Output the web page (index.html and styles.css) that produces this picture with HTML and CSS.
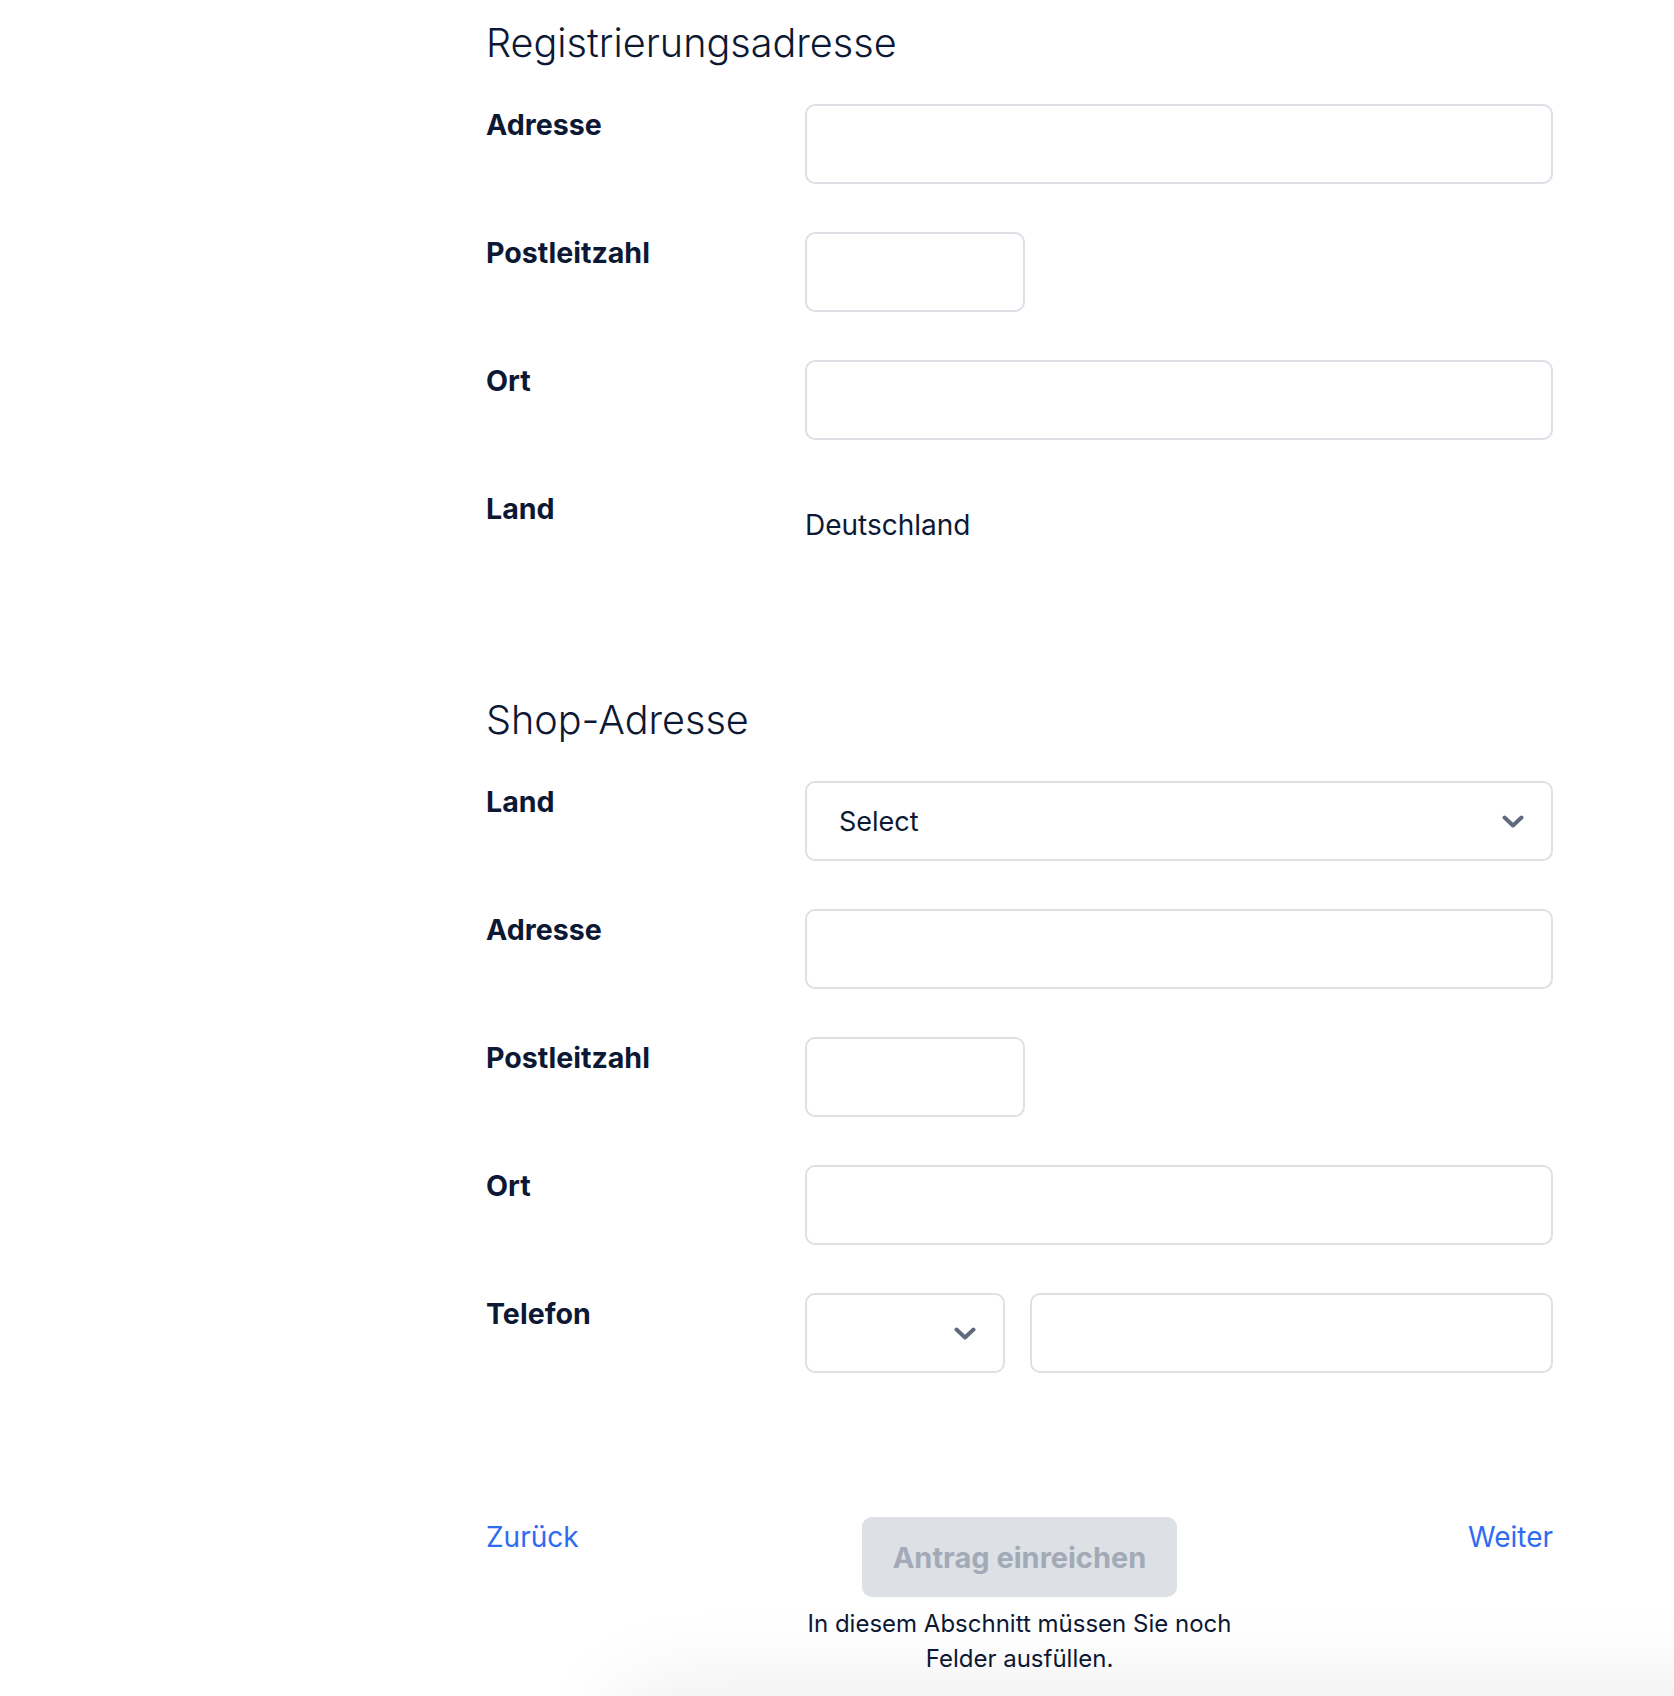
FILE: index.html
```html
<!DOCTYPE html>
<html lang="de">
<head>
    <meta charset="UTF-8">
    <meta name="viewport" content="width=device-width, initial-scale=1.0">
    <title>Antrag - Adressen</title>
    <link rel="stylesheet" href="styles.css">
</head>
<body>
    <main class="page">
        <section class="section">
            <h2 class="section-title">Registrierungsadresse</h2>
            <div class="form-grid">
                <label class="field-label" for="regAddress">Adresse</label>
                <input type="text" id="regAddress" class="text-input">

                <label class="field-label" for="regZip">Postleitzahl</label>
                <input type="text" id="regZip" class="text-input short">

                <label class="field-label" for="regCity">Ort</label>
                <input type="text" id="regCity" class="text-input">

                <span class="field-label">Land</span>
                <div class="static-value">Deutschland</div>
            </div>
        </section>

        <section class="section">
            <h2 class="section-title">Shop-Adresse</h2>
            <div class="form-grid">
                <span class="field-label">Land</span>
                <div class="select">
                    <span>Select</span>
                    <svg class="chevron" width="22" height="13" viewBox="0 0 22 13"><path d="M2.5 2.5 L11 10.5 L19.5 2.5"/></svg>
                </div>

                <label class="field-label" for="shopAddress">Adresse</label>
                <input type="text" id="shopAddress" class="text-input">

                <label class="field-label" for="shopZip">Postleitzahl</label>
                <input type="text" id="shopZip" class="text-input short">

                <label class="field-label" for="shopCity">Ort</label>
                <input type="text" id="shopCity" class="text-input">

                <label class="field-label" for="shopPhone">Telefon</label>
                <div class="phone-row">
                    <div class="select select-code">
                        <span></span>
                        <svg class="chevron" width="22" height="13" viewBox="0 0 22 13"><path d="M2.5 2.5 L11 10.5 L19.5 2.5"/></svg>
                    </div>
                    <input type="text" id="shopPhone" class="text-input">
                </div>
            </div>
        </section>

        <div class="actions">
            <a href="#" class="nav-link">Zurück</a>
            <div class="submit-col">
                <button class="submit-button" disabled>Antrag einreichen</button>
                <p class="hint">In diesem Abschnitt müssen Sie noch Felder ausfüllen.</p>
            </div>
            <a href="#" class="nav-link next">Weiter</a>
        </div>
    </main>

    <div class="bottom-shade"></div>
</body>
</html>
```

FILE: styles.css
```css
* {
    margin: 0;
    padding: 0;
    box-sizing: border-box;
}

body {
    font-family: 'Inter', 'Noto Sans', sans-serif;
    color: #0d1934;
    background-color: #ffffff;
}

.page {
    margin-left: 486px;
    width: 1067px;
    padding-top: 19px;
}

.section + .section {
    margin-top: 128px;
}

.section-title {
    font-size: 39.6px;
    font-weight: 300;
    line-height: 48px;
    margin-bottom: 37px;
}

.form-grid {
    display: grid;
    grid-template-columns: 319px 1fr;
    row-gap: 48px;
}

.field-label {
    font-size: 28.6px;
    font-weight: 700;
    line-height: 42px;
}

.text-input {
    width: 100%;
    height: 80px;
    border: 2px solid #dde0e5;
    border-radius: 10px;
    padding: 0 32px;
    font-family: inherit;
    font-size: 27px;
    color: inherit;
    background: #ffffff;
}

.text-input.short {
    width: 220px;
}

.static-value {
    height: 80px;
    display: flex;
    align-items: center;
    padding-bottom: 6px;
    font-size: 28px;
}

.select {
    height: 80px;
    border: 2px solid #dde0e5;
    border-radius: 10px;
    padding: 0 27px 0 32px;
    display: flex;
    align-items: center;
    justify-content: space-between;
    font-size: 27px;
}

.chevron path {
    fill: none;
    stroke: #5f6b7d;
    stroke-width: 4;
    stroke-linecap: round;
    stroke-linejoin: round;
}

.phone-row {
    display: flex;
    gap: 25px;
}

.select-code {
    width: 200px;
    flex-shrink: 0;
}

.actions {
    margin-top: 144px;
    display: grid;
    grid-template-columns: 1fr auto 1fr;
    align-items: start;
}

.nav-link {
    font-size: 28px;
    line-height: 40px;
    color: #2f6af2;
    text-decoration: none;
}

.nav-link.next {
    justify-self: end;
}

.submit-col {
    width: 460px;
    display: flex;
    flex-direction: column;
    align-items: center;
}

.submit-button {
    width: 315px;
    height: 80px;
    border: none;
    border-radius: 10px;
    background-color: #dde0e5;
    color: #a3aab7;
    font-family: inherit;
    font-size: 29px;
    font-weight: 700;
}

.hint {
    margin-top: 9px;
    font-size: 24px;
    line-height: 35px;
    text-align: center;
}

.bottom-shade {
    position: fixed;
    left: 620px;
    right: -300px;
    bottom: -100px;
    height: 100px;
    border-radius: 60px;
    box-shadow: 0 0 90px 10px rgba(0, 0, 0, 0.08);
}
```
